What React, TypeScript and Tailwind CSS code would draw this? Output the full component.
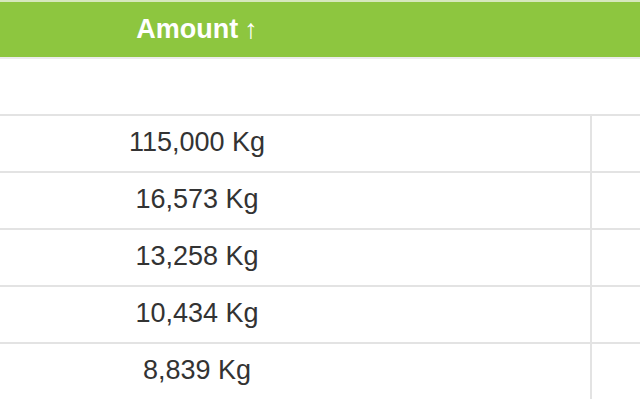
import React from "react";

const rows = ["115,000 Kg", "16,573 Kg", "13,258 Kg", "10,434 Kg", "8,839 Kg"];

export default function App() {
  return (
    <div
      className="w-[640px] h-[400px] overflow-hidden bg-white"
      style={{ fontFamily: '"Liberation Sans", Arial, sans-serif' }}
    >
      <div className="border-t-2 border-[#d6e8bd] bg-[#8dc63f] h-[57px] flex items-center">
        <div className="w-[394px] flex justify-center items-center text-white font-bold text-[27px] leading-none">
          <span>Amount</span>
          <span className="ml-[6px] font-normal">↑</span>
        </div>
      </div>
      <div className="border-t-2 border-[#ececec] h-[57px]" />
      {rows.map((r) => (
        <div key={r} className="flex border-t-2 border-[#e3e3e3] h-[57px]">
          <div className="w-[592px] border-r-2 border-[#e3e3e3] flex">
            <div className="w-[394px] flex items-center justify-center text-[27px] text-[#333] leading-none pb-[3px]">
              {r}
            </div>
          </div>
          <div className="flex-1" />
        </div>
      ))}
    </div>
  );
}
